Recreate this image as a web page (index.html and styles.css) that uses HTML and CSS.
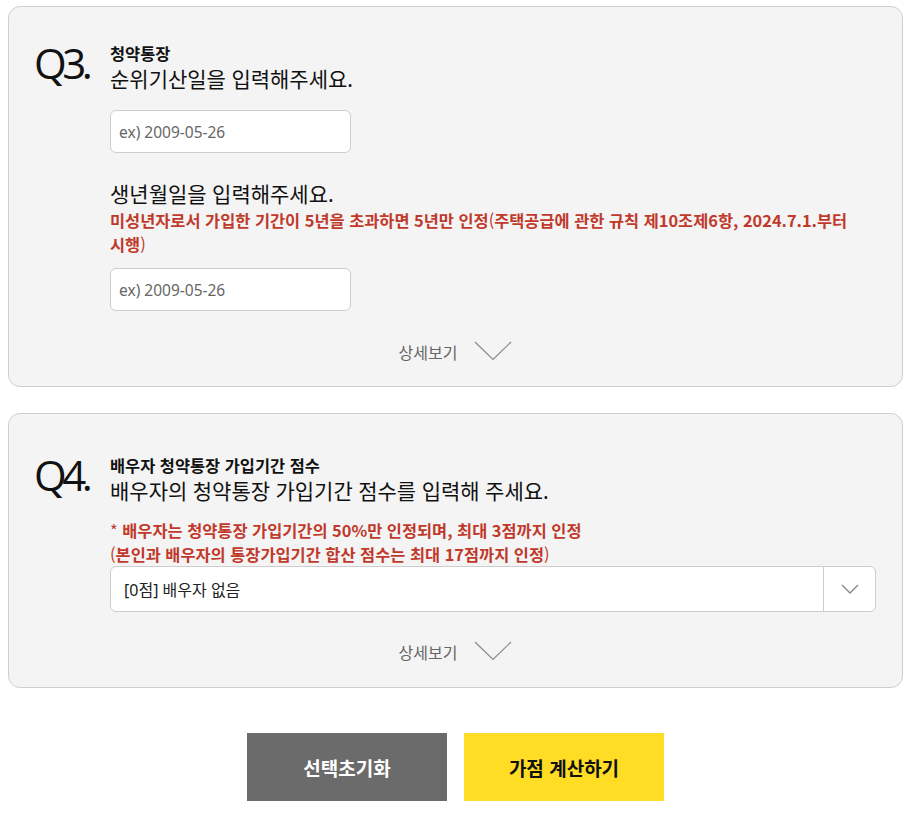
FILE: index.html
```html
<!DOCTYPE html>
<html lang="ko">
<head>
<meta charset="utf-8">
<title>청약 가점 계산</title>
<link rel="stylesheet" href="styles.css">
</head>
<body>
<main class="calc">
  <section class="card card--first">
    <div class="qnum">Q3.</div>
    <div class="qbody">
      <div class="label">청약통장</div>
      <h2 class="title">순위기산일을 입력해주세요.</h2>
      <input class="field" type="text" placeholder="ex) 2009-05-26">
      <h2 class="title title--sub">생년월일을 입력해주세요.</h2>
      <p class="notice">미성년자로서 가입한 기간이 5년을 초과하면 5년만 인정<span class="thin">(</span>주택공급에 관한 규칙 제10조제6항, 2024.7.1.부터 시행<span class="thin">)</span></p>
      <input class="field field--tight" type="text" placeholder="ex) 2009-05-26">
    </div>
    <button class="more" type="button">상세보기
      <svg class="more-icon" width="38" height="20" viewBox="0 0 38 20"><path d="M1 1 L19 18.5 L37 1" fill="none" stroke="#8a8a8a" stroke-width="1.2"/></svg>
    </button>
  </section>

  <section class="card card--second">
    <div class="qnum">Q4.</div>
    <div class="qbody">
      <div class="label">배우자 청약통장 가입기간 점수</div>
      <h2 class="title">배우자의 청약통장 가입기간 점수를 입력해 주세요.</h2>
      <p class="notice notice--gap"><span class="thin">* </span>배우자는 청약통장 가입기간의 50%만 인정되며, 최대 3점까지 인정<br><span class="thin">(</span>본인과 배우자의 통장가입기간 합산 점수는 최대 17점까지 인정<span class="thin">)</span></p>
      <div class="select">
        <span class="select-value">[0점] 배우자 없음</span>
        <span class="select-arrow">
          <svg width="18" height="10" viewBox="0 0 18 10"><path d="M1 1 L9 9 L17 1" fill="none" stroke="#888" stroke-width="1.4"/></svg>
        </span>
      </div>
    </div>
    <button class="more" type="button">상세보기
      <svg class="more-icon" width="38" height="20" viewBox="0 0 38 20"><path d="M1 1 L19 18.5 L37 1" fill="none" stroke="#8a8a8a" stroke-width="1.2"/></svg>
    </button>
  </section>

  <div class="actions">
    <button class="btn btn--reset" type="button">선택초기화</button>
    <button class="btn btn--calc" type="button">가점 계산하기</button>
  </div>
</main>
</body>
</html>
```
FILE: styles.css
```css
* { box-sizing: border-box; }

body {
  margin: 6px 8px 8px;
  background: #fff;
  font-family: "Noto Sans", "Noto Sans CJK KR", sans-serif;
  color: #111;
}

.calc {
  display: flex;
  flex-direction: column;
}

.card {
  display: grid;
  grid-template-columns: 75px 1fr;
  background: #f4f4f4;
  border: 1px solid #cfcfcf;
  border-radius: 12px;
  padding: 35px 26px 22px 26px;
}

.card--second {
  margin-top: 26px;
  padding-top: 40px;
  padding-bottom: 23px;
}

.qnum {
  font-family: "Open Sans", sans-serif;
  font-weight: 400;
  font-size: 42px;
  line-height: 42px;
  letter-spacing: -4.5px;
  color: #111;
  margin-left: -1px;
}

.qbody {
  display: flex;
  flex-direction: column;
  align-items: flex-start;
  min-width: 0;
}

.label {
  font-family: "Noto Sans CJK KR", sans-serif;
  font-weight: 700;
  font-size: 16.4px;
  line-height: 22px;
  color: #111;
}

.title {
  margin: 0;
  font-family: "Noto Sans", "Noto Sans CJK KR", sans-serif;
  font-weight: 400;
  font-size: 21px;
  line-height: 30px;
  color: #111;
}

.title--sub {
  margin-top: 27px;
  line-height: 28px;
}

.field {
  margin-top: 16px;
  width: 241px;
  height: 43px;
  border: 1px solid #cdcdcd;
  border-radius: 6px;
  background: #fff;
  padding: 0 8px;
  font-family: "Noto Sans", "Noto Sans CJK KR", sans-serif;
  font-size: 15.5px;
  color: #222;
}

.field::placeholder { color: #666; }

.field--tight { margin-top: 12px; }

.notice {
  margin: 0;
  font-family: "Noto Sans CJK KR", sans-serif;
  font-weight: 700;
  font-size: 16.4px;
  line-height: 24px;
  color: #c0392b;
  word-break: keep-all;
}

.notice .thin { font-weight: 400; }

.notice--gap { margin-top: 12px; }

.select {
  display: flex;
  align-items: stretch;
  width: 100%;
  height: 46px;
  background: #fff;
  border: 1px solid #cdcdcd;
  border-radius: 6px;
}

.select-value {
  flex: 1;
  display: flex;
  align-items: center;
  padding-left: 13px;
  font-family: "Noto Sans", "Noto Sans CJK KR", sans-serif;
  font-size: 16px;
  color: #222;
}

.select-arrow {
  width: 52px;
  border-left: 1px solid #cdcdcd;
  display: flex;
  align-items: center;
  justify-content: center;
}

.more {
  grid-column: 1 / -1;
  justify-self: center;
  display: flex;
  align-items: center;
  gap: 17px;
  margin-top: 28px;
  padding: 0;
  border: 0;
  background: none;
  height: 24px;
  font-family: "Noto Sans CJK KR", sans-serif;
  font-size: 16px;
  color: #666;
  cursor: pointer;
}

.more-icon { display: block; margin-top: -2px; }

.card--first .more { margin-top: 29px; }

.actions {
  display: flex;
  justify-content: center;
  gap: 17px;
  margin-top: 45px;
}

.btn {
  width: 200px;
  height: 68px;
  border: 0;
  font-family: "Noto Sans CJK KR", sans-serif;
  font-weight: 700;
  font-size: 19px;
  cursor: pointer;
}

.btn--reset { background: #6b6b6b; color: #fff; }
.btn--calc { background: #fedd24; color: #111; }
```
